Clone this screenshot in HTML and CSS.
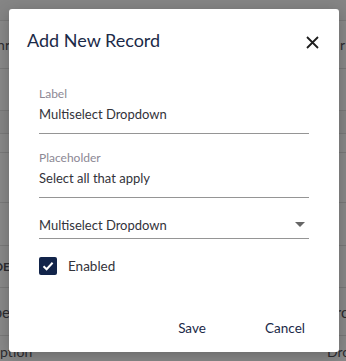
FILE: index.html
```html
<!DOCTYPE html>
<html lang="en">
<head>
    <meta charset="UTF-8">
    <meta name="viewport" content="width=device-width, initial-scale=1.0">
    <title>Add New Record</title>
    <link rel="stylesheet" href="styles.css">
</head>
<body>
    <!-- page behind the modal -->
    <div class="page">
        <div class="row row-bar"></div>
        <div class="row row-title">
            <span class="cell-left">Dynr</span>
            <span class="cell-right cell-far">r</span>
        </div>
        <div class="row row-42"></div>
        <div class="row row-23 row-dark"></div>
        <div class="row row-19"></div>
        <div class="row row-50"></div>
        <div class="row row-43"></div>
        <div class="row row-head">
            <span class="cell-left">CODE</span>
            <span class="cell-right">PI</span>
        </div>
        <div class="row row-body">
            <span class="cell-left">Type</span>
            <span class="cell-right">Pro</span>
        </div>
        <div class="row row-last">
            <span class="cell-left cell-wide">Option</span>
            <span class="cell-right">Dro</span>
        </div>
    </div>

    <div class="dialog">
        <div class="dialog-header">
            <h2 class="dialog-title">Add New Record</h2>
            <button class="close-btn" aria-label="Close">
                <svg width="13" height="13" viewBox="0 0 13 13">
                    <path d="M1 1 L12 12 M12 1 L1 12" stroke="#1e1e1e" stroke-width="1.8" fill="none"/>
                </svg>
            </button>
        </div>

        <div class="dialog-body">
            <div class="field">
                <div class="field-label">Label</div>
                <div class="field-value">Multiselect Dropdown</div>
            </div>
            <div class="field">
                <div class="field-label">Placeholder</div>
                <div class="field-value">Select all that apply</div>
            </div>
            <div class="field select">
                <div class="field-value">Multiselect Dropdown</div>
                <span class="caret"></span>
            </div>
            <label class="check">
                <span class="check-box">
                    <svg width="12" height="10" viewBox="0 0 12 10">
                        <path d="M1.5 5.2 L4.6 8.2 L10.6 1.8" stroke="#fff" stroke-width="2" fill="none"/>
                    </svg>
                </span>
                Enabled
            </label>
        </div>

        <div class="dialog-actions">
            <button class="text-btn">Save</button>
            <button class="text-btn">Cancel</button>
        </div>
    </div>
</body>
</html>
```

FILE: styles.css
```css
body {
    margin: 0;
    background-color: #8a8a8a;
    font-family: Lato, "Open Sans", sans-serif;
    overflow: hidden;
}

/* pagina de fundo */
.page {
    height: 361px;
    display: flex;
    flex-direction: column;
}

.row {
    display: flex;
    align-items: center;
    justify-content: space-between;
    border-bottom: 1px solid #7a7a7a;
    color: #2c2c30;
    font-size: 14px;
    box-sizing: border-box;
    flex-shrink: 0;
}

.row-bar { height: 21px; background-color: #858585; }
.row-title { height: 48px; }
.row-42 { height: 42px; }
.row-23 { height: 23px; }
.row-dark { background-color: #868686; }
.row-19 { height: 19px; }
.row-50 { height: 50px; }
.row-43 { height: 43px; }
.row-head { height: 42px; font-size: 12px; font-weight: bold; }
.row-body { height: 48px; font-size: 15px; }
.row-last { flex: 1; font-size: 14px; align-items: flex-end; border-bottom: none; line-height: 18px; }

.cell-left {
    width: 10px;
    overflow: hidden;
    display: flex;
    justify-content: flex-end;
    white-space: nowrap;
}

.cell-wide {
    width: 48px;
    justify-content: flex-start;
    margin-left: -11px;
}

.cell-right {
    width: 19px;
    white-space: nowrap;
    overflow: hidden;
}

.cell-far {
    padding-left: 13px;
    box-sizing: border-box;
}

/* modal */
.dialog {
    position: absolute;
    top: 9px;
    left: 9px;
    width: 330px;
    height: 343px;
    background-color: #fff;
    border-radius: 3px;
    box-shadow: 0 4px 16px rgba(0, 0, 0, 0.25);
    display: flex;
    flex-direction: column;
}

.dialog-header {
    display: flex;
    align-items: center;
    justify-content: space-between;
    padding: 19px 20px 0 18px;
}

.dialog-title {
    margin: 0;
    font-size: 18px;
    line-height: 24px;
    font-weight: normal;
    color: #1b2a48;
}

.close-btn {
    border: none;
    background: none;
    padding: 0;
    margin-top: 4px;
    width: 13px;
    height: 13px;
    display: flex;
}

.dialog-body {
    padding: 34px 30px 0;
}

.field {
    border-bottom: 1px solid #959595;
    margin-bottom: 16px;
}

.field-label {
    font-size: 12px;
    line-height: 16px;
    color: #8c8894;
}

.field-value {
    font-size: 13px;
    line-height: 20px;
    padding: 2px 0 9px;
    color: #33333a;
}

.select {
    display: flex;
    align-items: center;
    justify-content: space-between;
    margin-bottom: 18px;
}

.select .field-value {
    padding: 1px 0 3px;
}

.caret {
    width: 0;
    height: 0;
    border-left: 5px solid transparent;
    border-right: 5px solid transparent;
    border-top: 5px solid #666;
    margin-right: 4px;
    margin-top: -3px;
}

.check {
    display: flex;
    align-items: center;
    gap: 11px;
    font-size: 13.5px;
    color: #33333a;
}

.check-box {
    width: 18px;
    height: 18px;
    border-radius: 2px;
    background-color: #12244a;
    display: flex;
    align-items: center;
    justify-content: center;
}

.dialog-actions {
    margin-top: auto;
    display: flex;
    justify-content: flex-end;
    gap: 29px;
    padding: 0 22px 6px 0;
}

.text-btn {
    border: none;
    background: none;
    min-width: 64px;
    height: 36px;
    padding: 0 8px;
    font-family: Lato, "Open Sans", sans-serif;
    font-size: 13.5px;
    color: #1b2a48;
}
```
